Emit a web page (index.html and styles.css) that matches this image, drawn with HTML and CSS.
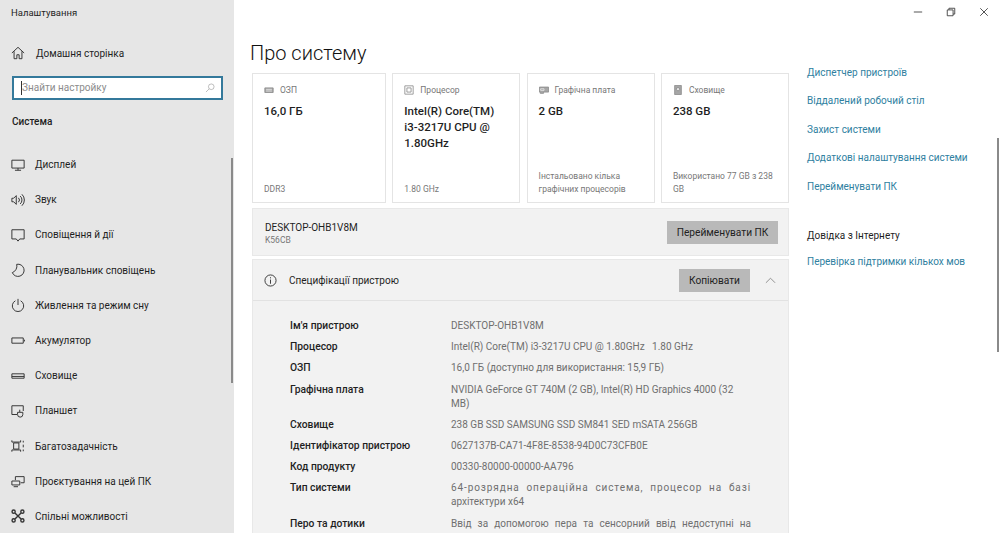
FILE: index.html
```html
<!DOCTYPE html>
<html lang="uk">
<head>
    <meta charset="utf-8">
    <title>Налаштування</title>
    <link rel="stylesheet" href="styles.css">
</head>
<body>
    <div class="window">
        <!-- Ліва панель -->
        <nav class="sidebar">
            <div class="app-title">Налаштування</div>
            <a class="home-link">
                <svg class="nav-icon" viewBox="0 0 16 16"><path d="M1 8 8 1.500 15 8M3.500 6v8.500h3.200v-4.500h2.600v4.500h3.200V6"/></svg>
                <span>Домашня сторінка</span>
            </a>
            <div class="search-box">
                <span class="caret"></span>
                <span class="search-text">Знайти настройку</span>
                <svg class="search-icon" viewBox="0 0 16 16"><circle cx="10" cy="6" r="4.500"/><path d="M6.700 9.300 1.500 14.500"/></svg>
            </div>
            <div class="section-title">Система</div>
            <ul class="nav-list">
                <li class="nav-item">
                    <svg class="nav-icon" viewBox="0 0 16 16"><path d="M1 2.500h14v9H1zM8 11.500v2.500M4.500 14h7"/></svg>
                    <span>Дисплей</span>
                </li>
                <li class="nav-item">
                    <svg class="nav-icon" viewBox="0 0 16 16"><path d="M1 6h2l3-3v10l-3-3H1zM8.500 5.500a3.500 3.500 0 0 1 0 5M10.500 3.500a6 6 0 0 1 0 9M12.500 1.500a9 9 0 0 1 0 13"/></svg>
                    <span>Звук</span>
                </li>
                <li class="nav-item">
                    <svg class="nav-icon" viewBox="0 0 16 16"><path d="M1 2h14v10.500h-5L8 15l-2-2.500H1z"/></svg>
                    <span>Сповіщення й дії</span>
                </li>
                <li class="nav-item">
                    <svg class="nav-icon" viewBox="0 0 16 16"><path d="M6.500 1.500A7 7 0 1 1 1.500 11 8 8 0 0 0 6.500 1.500z"/></svg>
                    <span>Планувальник сповіщень</span>
                </li>
                <li class="nav-item">
                    <svg class="nav-icon" viewBox="0 0 16 16"><path d="M5 3.200a6.500 6.500 0 1 0 6 0M8 1v7"/></svg>
                    <span>Живлення та режим сну</span>
                </li>
                <li class="nav-item">
                    <svg class="nav-icon" viewBox="0 0 16 16"><path d="M1 4.500h13v6H1zM15.500 6.500v2"/></svg>
                    <span>Акумулятор</span>
                </li>
                <li class="nav-item">
                    <svg class="nav-icon" viewBox="0 0 16 16"><path d="M1 5.500h14v5H1zM1 8.500h14"/></svg>
                    <span>Сховище</span>
                </li>
                <li class="nav-item">
                    <svg class="nav-icon" viewBox="0 0 16 16"><path d="M7 12H1V2h13v6M10 6.500v3M10 9.500h3.500v2.500a3 3 0 0 1-6 0V9.500H10"/></svg>
                    <span>Планшет</span>
                </li>
                <li class="nav-item">
                    <svg class="nav-icon" viewBox="0 0 16 16"><path d="M1 1.500v2M11 1.500v2M1 3.500h10M3 4.500h6v7H3zM1 12.500h10M1 12.500v2M11 12.500v2M14 2v2M14 6.500v3M14 12v2"/></svg>
                    <span>Багатозадачність</span>
                </li>
                <li class="nav-item">
                    <svg class="nav-icon" viewBox="0 0 16 16"><path d="M5 7V3h10v7h-4M1 8h9v4.500H1zM3 14.500h5"/></svg>
                    <span>Проєктування на цей ПК</span>
                </li>
                <li class="nav-item">
                    <svg class="nav-icon thick" viewBox="0 0 16 16"><circle cx="3" cy="3" r="1.800"/><circle cx="13" cy="3" r="1.800"/><circle cx="3" cy="13" r="1.800"/><circle cx="13" cy="13" r="1.800"/><path d="M4.500 4.500l7 7M11.500 4.500l-7 7"/></svg>
                    <span>Спільні можливості</span>
                </li>
            </ul>
            <div class="scroll-thumb side-thumb"></div>
        </nav>

        <main class="main">
            <header class="main-head">
                <h1 class="page-title">Про систему</h1>
                <div class="win-controls">
                    <svg class="win-btn" viewBox="0 0 12 12"><path d="M1 6h10"/></svg>
                    <svg class="win-btn" viewBox="0 0 12 12"><path d="M3.500 3.500V1.500h7v7h-2M1.500 3.500h7v7h-7z"/></svg>
                    <svg class="win-btn" viewBox="0 0 12 12"><path d="M1.500 1.500l9 9M10.500 1.500l-9 9"/></svg>
                </div>
            </header>

            <div class="pane">
                <section class="content">
                    <div class="cards">
                        <div class="card">
                            <div class="card-label">
                                <svg class="card-icon" viewBox="0 0 12 12"><path class="solid" d="M1 3.500h10v5.500H1z"/><path class="lines" d="M2.500 5.200h7M2.500 7.200h7"/></svg>
                                ОЗП
                            </div>
                            <div class="card-value">16,0 ГБ</div>
                            <div class="card-note">DDR3</div>
                        </div>
                        <div class="card">
                            <div class="card-label">
                                <svg class="card-icon" viewBox="0 0 12 12"><path d="M1 1h10v10H1zM3.500 3.500h5v5h-5z"/></svg>
                                Процесор
                            </div>
                            <div class="card-value">Intel(R) Core(TM) i3-3217U CPU @ 1.80GHz</div>
                            <div class="card-note">1.80 GHz</div>
                        </div>
                        <div class="card">
                            <div class="card-label">
                                <svg class="card-icon" viewBox="0 0 12 12"><path class="solid" d="M.5 2.500h11v6h-6v1.500h-4v-1.500h-1z"/><path class="lines" d="M2 4.500h4v2H2z"/></svg>
                                Графічна плата
                            </div>
                            <div class="card-value">2 GB</div>
                            <div class="card-note">Інстальовано кілька графічних процесорів</div>
                        </div>
                        <div class="card">
                            <div class="card-label">
                                <svg class="card-icon" viewBox="0 0 12 12"><path class="solid" d="M2 .5h8v11H2z"/><circle class="hole" cx="6" cy="5" r="2"/></svg>
                                Сховище
                            </div>
                            <div class="card-value">238 GB</div>
                            <div class="card-note">Використано 77 GB з 238 GB</div>
                        </div>
                    </div>

                    <div class="panel name-panel">
                        <div>
                            <div class="pc-name">DESKTOP-OHB1V8M</div>
                            <div class="pc-model">K56CB</div>
                        </div>
                        <button class="gray-btn rename-btn">Перейменувати ПК</button>
                    </div>

                    <div class="panel spec-panel">
                        <div class="spec-head">
                            <svg class="info-icon" viewBox="0 0 14 14"><circle cx="7" cy="7" r="6"/><path d="M7 6v4.500M7 3.500v1.200"/></svg>
                            <span class="spec-title">Специфікації пристрою</span>
                            <button class="gray-btn copy-btn">Копіювати</button>
                            <svg class="chevron" viewBox="0 0 12 7"><path d="M1 6l5-5 5 5"/></svg>
                        </div>
                        <dl class="spec-list">
                            <dt>Ім'я пристрою</dt>
                            <dd>DESKTOP-OHB1V8M</dd>
                            <dt>Процесор</dt>
                            <dd>Intel(R) Core(TM) i3-3217U CPU @ 1.80GHz &nbsp; 1.80 GHz</dd>
                            <dt>ОЗП</dt>
                            <dd>16,0 ГБ (доступно для використання: 15,9 ГБ)</dd>
                            <dt>Графічна плата</dt>
                            <dd>NVIDIA GeForce GT 740M (2 GB), Intel(R) HD Graphics 4000 (32 MB)</dd>
                            <dt>Сховище</dt>
                            <dd>238 GB SSD SAMSUNG SSD SM841 SED mSATA 256GB</dd>
                            <dt>Ідентифікатор пристрою</dt>
                            <dd>0627137B-CA71-4F8E-8538-94D0C73CFB0E</dd>
                            <dt>Код продукту</dt>
                            <dd>00330-80000-00000-AA796</dd>
                            <dt>Тип системи</dt>
                            <dd class="spaced"><span class="full-line">64-розрядна операційна система, процесор на базі</span> архітектури x64</dd>
                            <dt>Перо та дотики</dt>
                            <dd class="full-line">Ввід за допомогою пера та сенсорний ввід недоступні на</dd>
                        </dl>
                    </div>
                </section>

                <aside class="related">
                    <a class="rel-link first-link">Диспетчер пристроїв</a>
                    <a class="rel-link">Віддалений робочий стіл</a>
                    <a class="rel-link">Захист системи</a>
                    <a class="rel-link">Додаткові налаштування системи</a>
                    <a class="rel-link">Перейменувати ПК</a>
                    <div class="rel-title">Довідка з Інтернету</div>
                    <a class="rel-link">Перевірка підтримки кількох мов</a>
                </aside>
            </div>
            <div class="scroll-thumb main-thumb"></div>
        </main>
    </div>
</body>
</html>
```

FILE: styles.css
```css
* {
    box-sizing: border-box;
}

html, body {
    margin: 0;
    padding: 0;
    height: 533px;
    overflow: hidden;
}

body {
    font-family: Roboto, "Open Sans", sans-serif;
    font-size: 10px;
    color: #1f1f1f;
    background: #fff;
}

.window {
    display: flex;
    height: 533px;
}

/* Ліва панель */
.sidebar {
    position: relative;
    width: 234px;
    flex-shrink: 0;
    background: #e6e6e6;
    overflow: hidden;
}

.app-title {
    padding: 6px 0 0 11px;
    height: 43px;
    font-size: 9.5px;
    line-height: 14px;
}

.home-link {
    display: flex;
    align-items: center;
    gap: 11px;
    height: 20px;
    padding-left: 11px;
    margin-bottom: 13px;
}

.nav-icon {
    width: 14px;
    height: 14px;
    flex-shrink: 0;
    fill: none;
    stroke: #333;
    stroke-width: 1.1;
}

.thick {
    stroke-width: 1.6;
}

.search-box {
    display: flex;
    align-items: center;
    width: 211px;
    height: 24px;
    margin-left: 12px;
    padding: 0 6px 1px 7px;
    background: #fff;
    border: 2px solid #34799b;
}

.caret {
    width: 1px;
    height: 14px;
    background: #333;
}

.search-text {
    flex: 1;
    color: #8c8c8c;
}

.search-icon {
    width: 10px;
    height: 10px;
    fill: none;
    stroke: #9a9a9a;
}

.section-title {
    margin: 15px 0 0 12px;
    height: 32px;
    line-height: 14px;
    font-weight: 500;
}

.nav-list {
    list-style: none;
    margin: 0;
    padding: 0;
}

.nav-item {
    display: flex;
    align-items: center;
    gap: 10px;
    height: 35.2px;
    padding-left: 11px;
}

.scroll-thumb {
    position: absolute;
    width: 2px;
    background: #8a8a8a;
}

.side-thumb {
    top: 158px;
    left: 231px;
    height: 225px;
}

/* Основна частина */
.main {
    position: relative;
    flex: 1;
    min-width: 0;
}

.main-head {
    display: flex;
    justify-content: space-between;
    height: 68px;
    padding-left: 16px;
}

.page-title {
    margin: 0;
    padding-top: 39px;
    font-size: 20px;
    line-height: 28px;
    font-weight: 300;
    color: #111;
}

.win-controls {
    display: flex;
    gap: 23px;
    padding: 7px 11px 0 0;
}

.win-btn {
    width: 10px;
    height: 10px;
    fill: none;
    stroke: #333;
}

.pane {
    display: flex;
    height: 465px;
    overflow: hidden;
}

.content {
    width: 537px;
    flex-shrink: 0;
    margin-left: 18px;
    padding-top: 5px;
}

.cards {
    display: grid;
    grid-template-columns: 134px 128px 128px 128px;
    column-gap: 6.300px;
    height: 130px;
}

.card {
    display: flex;
    flex-direction: column;
    padding: 9px 10px 6px 11px;
    border: 1px solid #e4e4e4;
}

.card-label {
    display: flex;
    align-items: center;
    gap: 6px;
    height: 14px;
    font-size: 8.500px;
    color: #777;
}

.card-icon {
    width: 10px;
    height: 10px;
    fill: none;
    stroke: #8c8c8c;
}

.card-icon .solid {
    fill: #a6a6a6;
}

.card-icon .hole {
    fill: #e4e4e4;
}

.card-icon .lines {
    stroke: #e4e4e4;
}

.card-value {
    margin-top: 6px;
    font-size: 11.500px;
    line-height: 16px;
    font-weight: 500;
}

.card-note {
    margin-top: auto;
    font-size: 8.500px;
    line-height: 13px;
    color: #777;
}

.panel {
    background: #f2f2f2;
}

.name-panel {
    display: flex;
    justify-content: space-between;
    align-items: center;
    height: 48px;
    margin-top: 5px;
    padding: 0 10px 0 12px;
    border: 1px solid #e8e8e8;
}

.pc-name {
    padding-top: 2px;
    line-height: 14px;
}

.pc-model {
    font-size: 8.500px;
    line-height: 11px;
    color: #777;
}

.gray-btn {
    height: 23px;
    padding: 0;
    border: 0;
    background: #b9b9b9;
    font-family: inherit;
    font-size: 10.2px;
    color: #222;
}

.rename-btn {
    width: 111px;
}

.spec-panel {
    height: 280px;
    margin-top: 3px;
    border: 1px solid #e8e8e8;
}

.spec-head {
    display: flex;
    align-items: center;
    height: 41px;
    padding: 0 12px 0 11px;
    border-bottom: 1px solid #e2e2e2;
}

.info-icon {
    width: 13px;
    height: 13px;
    fill: none;
    stroke: #333;
}

.spec-title {
    flex: 1;
    margin-left: 12px;
}

.copy-btn {
    width: 71px;
}

.chevron {
    width: 11px;
    height: 7px;
    margin-left: 15px;
    fill: none;
    stroke: #8a8a8a;
}

.spec-list {
    display: grid;
    grid-template-columns: 161px 300px;
    row-gap: 7.200px;
    margin: 0;
    padding: 18px 0 0 37px;
    line-height: 14px;
}

.spec-list dt {
    font-size: 10.3px;
    font-weight: 500;
    color: #1f1f1f;
}

.spec-list dd {
    margin: 0;
    color: #6f6f6f;
}

.full-line {
    display: block;
    text-align: justify;
    text-align-last: justify;
}

.spaced .full-line {
    letter-spacing: .9px;
}

/* Права колонка */
.related {
    display: flex;
    flex-direction: column;
    padding: 0 0 0 18px;
}

.rel-link {
    display: block;
    height: 14px;
    margin-bottom: 14.500px;
    line-height: 14px;
    white-space: nowrap;
    color: #2f7f9f;
}

.first-link {
    margin-top: -2.500px;
}

.rel-title {
    margin-top: 20.500px;
    height: 26px;
    line-height: 14px;
}

.main-thumb {
    top: 138px;
    right: 1px;
    height: 214px;
}
```
